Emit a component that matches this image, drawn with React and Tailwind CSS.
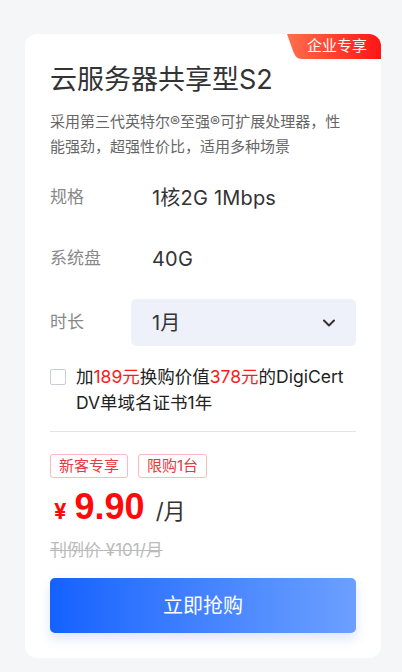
import React from 'react'

const Row = ({ label, children }) => (
    <div className='flex items-center h-[47px]'>
        <span className='w-[102px] text-[17px] text-[#888]'>{label}</span>
        {children}
    </div>
)

export default function App() {
    return (
        <div className='min-h-screen bg-[#f5f6f8] pt-[34px] pb-[14px] font-["Inter","Noto_Sans_CJK_SC",sans-serif]'>
            <div className='relative ml-[25px] w-[356px] bg-white rounded-[12px] px-[25px] pt-[28px] pb-[25px]'>
                {/* 角标 */}
                <div className='absolute top-0 right-0 h-[25px] w-[94px] overflow-hidden rounded-tr-[12px]'>
                    <svg className='absolute inset-0' width='94' height='25' viewBox='0 0 94 25'>
                        <defs>
                            <linearGradient id='bg' x1='0' y1='0' x2='1' y2='0'>
                                <stop offset='0' stopColor='#ff6e4e' />
                                <stop offset='1' stopColor='#ff1515' />
                            </linearGradient>
                        </defs>
                        <path d='M0 0 H94 V25 H15 C10 25 8 22 6 17 Z' fill='url(#bg)' />
                    </svg>
                    <span className='relative flex h-full items-center justify-end pr-[14px] text-[15px] text-white'>企业专享</span>
                </div>

                <h1 className='text-[27px] leading-[36px] text-[#333]'>云服务器共享型S2</h1>
                <p className='mt-[11px] text-[15px] leading-[25px] text-[#666]'>
                    采用第三代英特尔®至强®可扩展处理器，性<br />能强劲，超强性价比，适用多种场景
                </p>

                <div className='mt-[15px] flex flex-col gap-[14px]'>
                    <Row label='规格'>
                        <span className='text-[20px] tracking-[0.2px] text-[#333]'>1核2G 1Mbps</span>
                    </Row>
                    <Row label='系统盘'>
                        <span className='text-[20px] tracking-[0.2px] text-[#333]'>40G</span>
                    </Row>
                    <div className='flex items-center h-[47px] mt-[3px]'>
                        <span className='w-[81px] text-[17px] text-[#888]'>时长</span>
                        <div className='flex-1 h-[47px] bg-[#eef1fa] rounded-[5px] flex items-center justify-between pl-[21px] pr-[20px]'>
                            <span className='text-[20px] text-[#333]'>1月</span>
                            <svg width='14' height='14' viewBox='0 0 14 14' fill='none'>
                                <path d='M2 4.5 L7 9.5 L12 4.5' stroke='#333' strokeWidth='2' strokeLinecap='round' strokeLinejoin='round' />
                            </svg>
                        </div>
                    </div>
                </div>

                <label className='mt-[18px] flex items-start gap-[10px]'>
                    <span className='mt-[5px] w-[16px] h-[16px] shrink-0 rounded-[2px] border-[1.5px] border-[#c8ccd4] bg-white' />
                    <span className='text-[17.5px] leading-[26px] text-[#222]'>
                        加<span className='text-[#ff1a1a]'>189元</span>换购价值<span className='text-[#ff1a1a]'>378元</span>的DigiCert DV单域名证书1年
                    </span>
                </label>

                <div className='mt-[15px] h-px bg-[#e4e4e4]' />

                <div className='mt-[22px] flex gap-[10px]'>
                    <span className='h-[24px] px-[8px] flex items-center rounded-[3px] border border-[#ffb8bc] text-[15px] text-[#e33a40]'>新客专享</span>
                    <span className='h-[24px] px-[8px] flex items-center rounded-[3px] border border-[#ffb8bc] text-[15px] text-[#e33a40]'>限购1台</span>
                </div>

                <div className='mt-[7px] flex items-baseline text-[#ff0a0a] font-bold'>
                    <span className='ml-[4px] text-[22px]'>¥</span>
                    <span className='ml-[8px] text-[36px] leading-[44px] font-["Liberation_Sans",Arial,sans-serif]'>9.90</span>
                    <span className='ml-[11px] text-[22px] font-normal text-[#333]'>/月</span>
                </div>
                <div className='mt-[9px] text-[17px] leading-[24px] text-[#bbb] line-through'>刊例价 ¥101/月</div>

                <button className='mt-[16px] w-full h-[55px] rounded-[5px] bg-gradient-to-r from-[#1361ff] to-[#6c9fff] text-white text-[20px] shadow-[0_6px_12px_rgba(30,90,220,0.15)]'>
                    立即抢购
                </button>
            </div>
        </div>
    )
}
